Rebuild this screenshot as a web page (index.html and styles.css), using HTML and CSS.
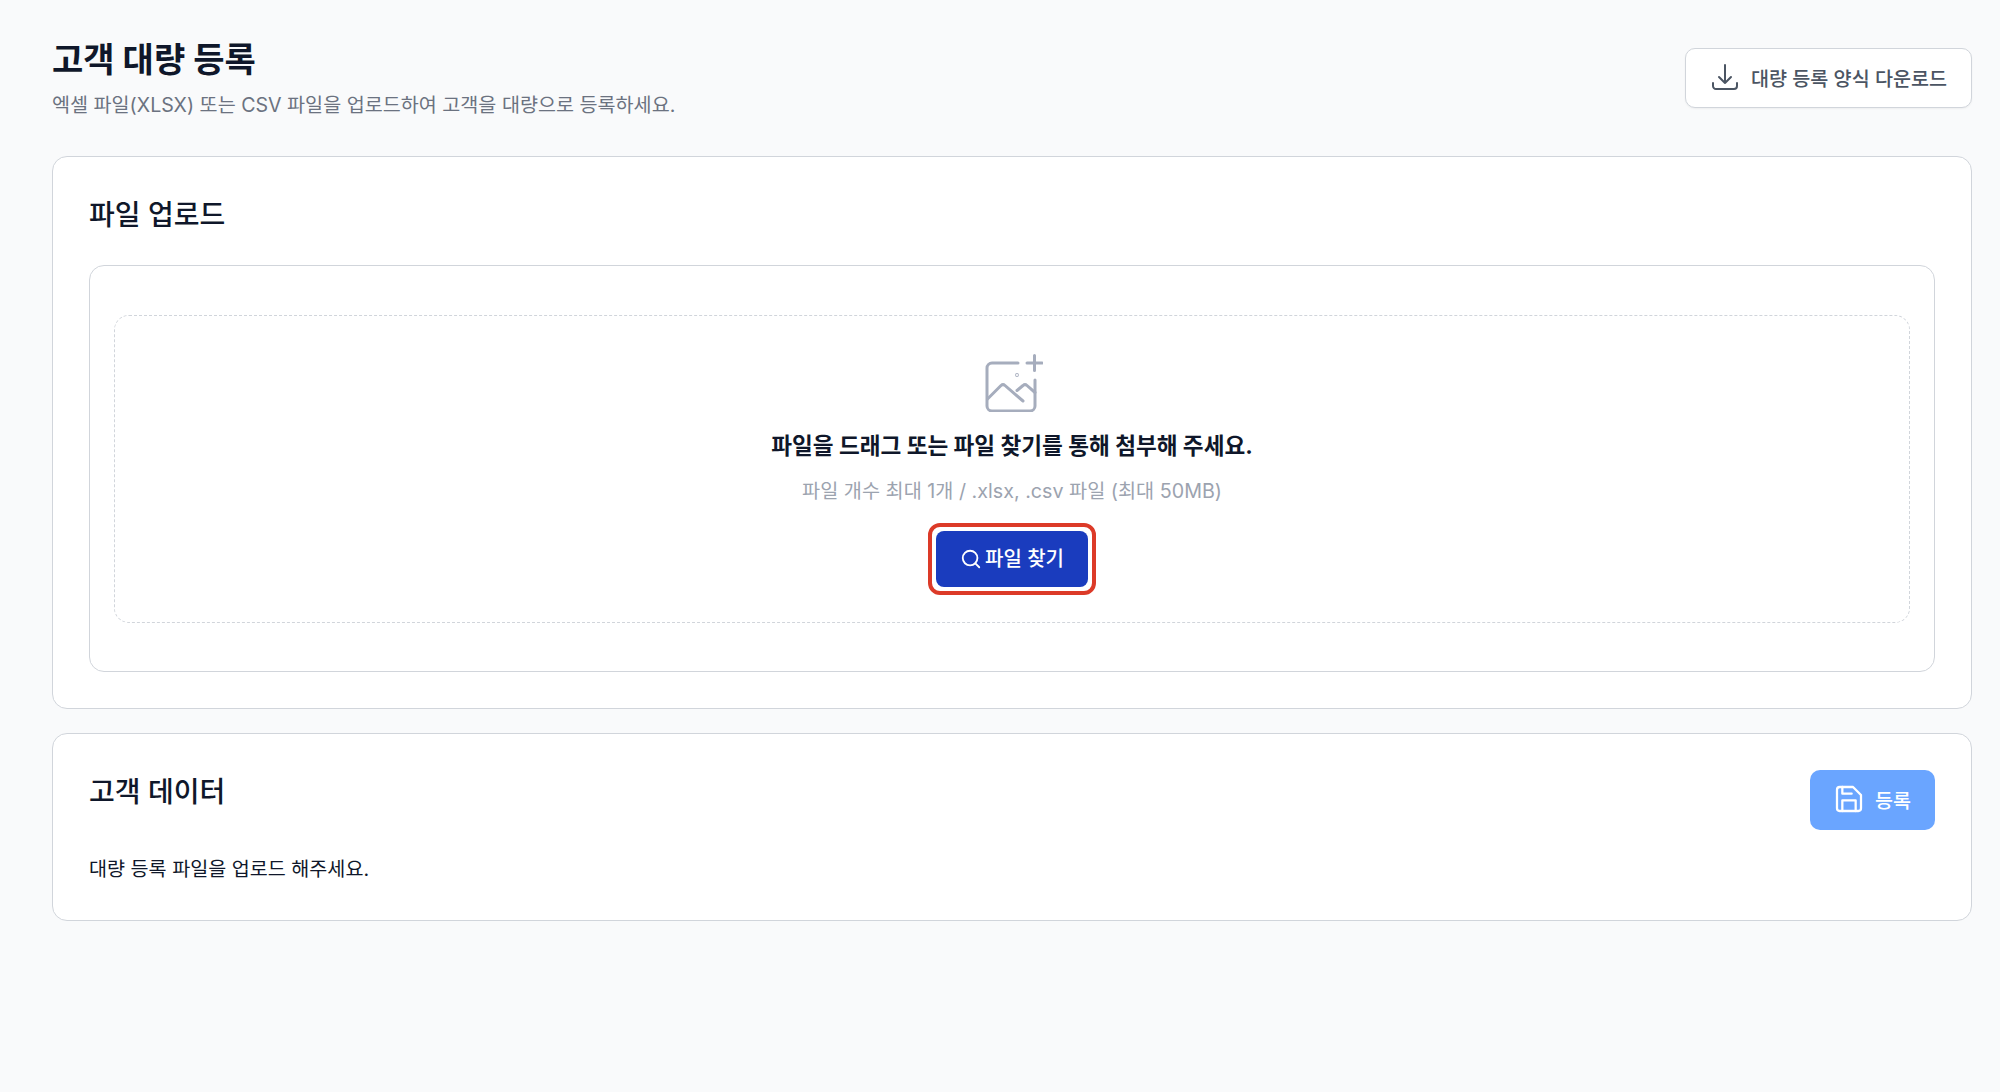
FILE: index.html
```html
<!DOCTYPE html>
<html lang="ko">
<head>
    <meta charset="UTF-8">
    <meta name="viewport" content="width=device-width, initial-scale=1.0">
    <title>고객 대량 등록</title>
    <link rel="stylesheet" href="styles.css">
</head>
<body>

    <main class="page">
        <!-- Page header -->
        <header class="page-header">
            <div>
                <h1 class="page-title">고객 대량 등록</h1>
                <p class="page-desc">엑셀 파일(XLSX) 또는 CSV 파일을 업로드하여 고객을 대량으로 등록하세요.</p>
            </div>
            <button class="btn btn-outline">
                <svg class="btn-icon" viewBox="0 0 24 24" fill="none" stroke="currentColor" stroke-width="1.5" stroke-linecap="round" stroke-linejoin="round">
                    <path d="M3 16.5v2.25A2.25 2.25 0 0 0 5.25 21h13.5A2.25 2.25 0 0 0 21 18.75V16.5M16.5 12 12 16.5m0 0L7.5 12m4.5 4.5V3"/>
                </svg>
                대량 등록 양식 다운로드
            </button>
        </header>

        <!-- File upload -->
        <section class="card">
            <h2 class="card-title">파일 업로드</h2>
            <div class="upload-box">
                <div class="dropzone">
                    <svg class="upload-icon" viewBox="0 0 64 60" fill="none" stroke="#a6adbd" stroke-width="3" stroke-linecap="round" stroke-linejoin="round">
                        <path d="M39 11H13a5 5 0 0 0-5 5v38a5 5 0 0 0 5 5h38a5 5 0 0 0 5-5V28"/>
                        <path d="M8.500 47 22 33.500a3 3 0 0 1 4 0L44 49"/>
                        <path d="M38 38.500l6-5a3 3 0 0 1 4 0l8 7"/>
                        <path d="M48 11h15M55.500 3.500v15"/>
                        <circle cx="38" cy="23" r="0.400"/>
                    </svg>
                    <p class="drop-title">파일을 드래그 또는 파일 찾기를 통해 첨부해 주세요.</p>
                    <p class="drop-hint">파일 개수 최대 1개 / .xlsx, .csv 파일 (최대 50MB)</p>
                    <button class="btn-find">
                        <svg class="find-icon" viewBox="0 0 24 24" fill="none" stroke="currentColor" stroke-width="2" stroke-linecap="round" stroke-linejoin="round">
                            <circle cx="11" cy="11" r="8"/>
                            <path d="m21 21-4.300-4.300"/>
                        </svg>
                        파일 찾기
                    </button>
                </div>
            </div>
        </section>

        <!-- Customer data -->
        <section class="card">
            <div class="card-head">
                <h2 class="card-title">고객 데이터</h2>
                <button class="btn btn-primary">
                    <svg class="btn-icon" viewBox="0 0 24 24" fill="none" stroke="currentColor" stroke-width="1.700" stroke-linecap="round" stroke-linejoin="round">
                        <path d="M19 21H5a2 2 0 0 1-2-2V5a2 2 0 0 1 2-2h10l6 6v10a2 2 0 0 1-2 2z"/>
                        <path d="M17 21v-8H7v8"/>
                        <path d="M7 3v5h7"/>
                    </svg>
                    등록
                </button>
            </div>
            <p class="empty-text">대량 등록 파일을 업로드 해주세요.</p>
        </section>
    </main>

</body>
</html>
```

FILE: styles.css
```css
* {
    box-sizing: border-box;
}

body {
    margin: 0;
    background-color: #f9fafb;
    color: #0f172a;
    font-family: Inter, "Noto Sans CJK KR", sans-serif;
    font-size: 19.600px;
}

h1, h2, p {
    margin: 0;
}

button {
    font-family: inherit;
    cursor: pointer;
}

.page {
    min-height: 1092px;
    padding: 36px 28px 40px 52px;
}

.page-header {
    display: flex;
    justify-content: space-between;
    align-items: flex-start;
    height: 120px;
}

.page-title {
    font-size: 34px;
    font-weight: 700;
    line-height: 48px;
}

.page-desc {
    margin-top: 6px;
    color: #6b7280;
    line-height: 30px;
}

/* Buttons */
.btn {
    display: flex;
    align-items: center;
    gap: 10px;
    height: 60px;
    padding: 0 24px 2px;
    border-radius: 10px;
    font-size: 19.600px;
    font-weight: 500;
}

.btn-icon {
    width: 32px;
    height: 32px;
    margin-left: -1px;
}

.btn-outline {
    margin-top: 12px;
    background-color: #fff;
    border: 1px solid #d1d5db;
    box-shadow: 0 1px 2px rgba(0, 0, 0, 0.05);
    color: #4b5563;
}

.btn-primary {
    background-color: #6aa5ff;
    border: none;
    color: #fff;
}

/* Cards */
.card {
    margin-bottom: 24px;
    padding: 36px;
    background-color: #fff;
    border: 1px solid #d1d5db;
    border-radius: 15px;
}

.card-title {
    font-size: 28px;
    font-weight: 500;
    line-height: 44px;
}

.card-head {
    display: flex;
    justify-content: space-between;
    align-items: flex-start;
    margin-bottom: 24px;
}

.empty-text {
    line-height: 30px;
}

/* Upload area */
.upload-box {
    margin-top: 28px;
    padding: 49px 24px 48px;
    border: 1px solid #d1d5db;
    border-radius: 15px;
}

.dropzone {
    display: flex;
    flex-direction: column;
    align-items: center;
    padding: 36px 36px 35px;
    border: 1px dashed #d1d5db;
    border-radius: 15px;
}

.upload-icon {
    width: 64px;
    height: 60px;
    margin-left: -3px;
}

.drop-title {
    margin-top: 19px;
    font-size: 22.600px;
    font-weight: 700;
    line-height: 30px;
}

.drop-hint {
    margin-top: 15px;
    color: #9ca3af;
    font-size: 19.700px;
    line-height: 30px;
}

.btn-find {
    position: relative;
    display: flex;
    justify-content: center;
    align-items: center;
    gap: 3px;
    width: 152px;
    height: 56px;
    margin-top: 25px;
    padding: 0 0 3px;
    background-color: #1a3cbe;
    border: none;
    border-radius: 8px;
    color: #fff;
    font-size: 20px;
    font-weight: 500;
}

/* Red highlight drawn around the button */
.btn-find::after {
    content: "";
    position: absolute;
    inset: -8px;
    border: 4px solid #dc3a28;
    border-radius: 12px;
}

.find-icon {
    width: 22px;
    height: 22px;
    margin-top: 3px;
}
```
